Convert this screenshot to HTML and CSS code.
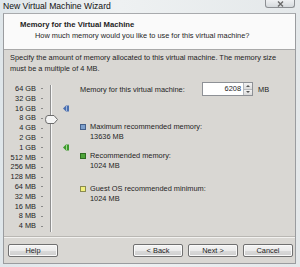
FILE: index.html
```html
<!DOCTYPE html>
<html>
<head>
<meta charset="utf-8">
<link rel="stylesheet" href="styles.css">
</head>
<body>
<div class="window">
  <div class="titlebar">
    <span class="title">New Virtual Machine Wizard</span>
    <span class="close"><svg width="9" height="6" viewBox="0 0 9 6"><path d="M2 0.5 L7 5.5 M7 0.5 L2 5.5" stroke="#6a6a6a" stroke-width="1.4" fill="none"/></svg></span>
  </div>
  <div class="client">
    <div class="header">
      <div class="h-title">Memory for the Virtual Machine</div>
      <div class="h-sub">How much memory would you like to use for this virtual machine?</div>
    </div>
    <div class="content">
      <div class="desc">Specify the amount of memory allocated to this virtual machine. The memory size must be a multiple of 4 MB.</div>
      <div class="main">
        <div class="scale">
          <div class="labels">
            <div class="row"><span>64 GB</span><i></i></div>
            <div class="row"><span>32 GB</span><i></i></div>
            <div class="row"><span>16 GB</span><i></i></div>
            <div class="row"><span>8 GB</span><i></i></div>
            <div class="row"><span>4 GB</span><i></i></div>
            <div class="row"><span>2 GB</span><i></i></div>
            <div class="row"><span>1 GB</span><i></i></div>
            <div class="row"><span>512 MB</span><i></i></div>
            <div class="row"><span>256 MB</span><i></i></div>
            <div class="row"><span>128 MB</span><i></i></div>
            <div class="row"><span>64 MB</span><i></i></div>
            <div class="row"><span>32 MB</span><i></i></div>
            <div class="row"><span>16 MB</span><i></i></div>
            <div class="row"><span>8 MB</span><i></i></div>
            <div class="row"><span>4 MB</span><i></i></div>
          </div>
          <div class="track"></div>
          <svg class="thumb" width="13" height="9" viewBox="0 0 13 9"><path d="M3 0.5 H9 L12.5 4.5 L9 8.5 H3 Q0.5 8.5 0.5 4.5 Q0.5 0.5 3 0.5 Z" fill="#f4f4f4" stroke="#6c6c6c" stroke-width="1"/></svg>
          <svg class="marker m-blue" width="6" height="7" viewBox="0 0 6 7"><path d="M0 3.5 L3 0.5 H6 V6.5 H3 Z" fill="#4a6fb0"/><path d="M3.5 1 V6" stroke="#9fb6dc" stroke-width="1"/></svg>
          <svg class="marker m-green" width="6" height="7" viewBox="0 0 6 7"><path d="M0 3.5 L3 0.5 H6 V6.5 H3 Z" fill="#3d9a2c"/><path d="M3.5 1 V6" stroke="#9fd88e" stroke-width="1"/></svg>
        </div>
        <div class="details">
          <div class="mem-row">
            <span class="mem-label">Memory for this virtual machine:</span>
            <span class="field">
              <span class="input">6208</span>
              <span class="spin"><span class="up"></span><span class="down"></span></span>
            </span>
            <span class="unit">MB</span>
          </div>
          <div class="legend l-max">
            <div class="leg-head"><span class="sq sq-blue"></span>Maximum recommended memory:</div>
            <div class="leg-val">13636 MB</div>
          </div>
          <div class="legend l-rec">
            <div class="leg-head"><span class="sq sq-green"></span>Recommended memory:</div>
            <div class="leg-val">1024 MB</div>
          </div>
          <div class="legend l-min">
            <div class="leg-head"><span class="sq sq-yellow"></span>Guest OS recommended minimum:</div>
            <div class="leg-val">1024 MB</div>
          </div>
        </div>
      </div>
    </div>
    <div class="footer">
      <button class="btn">Help</button>
      <div class="nav">
        <button class="btn">&lt; Back</button>
        <button class="btn">Next &gt;</button>
        <button class="btn">Cancel</button>
      </div>
    </div>
  </div>
</div>
</body>
</html>
```
FILE: styles.css
```css
* { box-sizing: border-box; }
html, body { margin: 0; padding: 0; }
body {
  width: 300px;
  height: 267px;
  overflow: hidden;
  font-family: "Liberation Sans", Arial, sans-serif;
  font-size: 7.4px;
  color: #1e1e1e;
  background: linear-gradient(90deg, #dfe6ea 0%, #eef1f2 40%, #e4e8ea 100%);
}
.window {
  width: 300px;
  height: 267px;
  display: flex;
  flex-direction: column;
}
.titlebar {
  height: 13px;
  display: flex;
  justify-content: space-between;
  align-items: flex-start;
  padding-left: 3px;
  padding-right: 5px;
}
.title {
  font-size: 8.6px;
  line-height: 13px;
  color: #111;
}
.close {
  width: 30px;
  height: 8px;
  border: 1px solid #8c8f93;
  border-top: none;
  border-radius: 0 0 3px 3px;
  background: linear-gradient(#eef0f2, #d6dadd);
  display: flex;
  align-items: center;
  justify-content: center;
}
.client {
  margin: 0 4px 3px 3px;
  flex: 1;
  background: #d9d7d3;
  border: 1px solid #9a9c9f;
  border-top-color: #a8aaad;
  display: flex;
  flex-direction: column;
}
.header {
  background: #fafafa;
  height: 36px;
  border-bottom: 1px solid #a9a9a9;
  padding: 5px 0 0 16px;
  line-height: 11px;
}
.h-title { font-weight: bold; font-size: 7.7px; }
.h-sub { padding-left: 15px; }
.content {
  padding: 2px 6px 0 6px;
  flex: 1;
}
.desc {
  line-height: 11px;
  width: 280px;
}
.main {
  margin-top: 10px;
  display: flex;
  margin-left: -6px;
}
.scale {
  position: relative;
  width: 75px;
  height: 147px;
}
.labels {
  display: flex;
  flex-direction: column;
}
.row {
  height: 9.8px;
  display: flex;
  align-items: center;
}
.row span {
  width: 32px;
  text-align: right;
  line-height: 9.8px;
  white-space: nowrap;
}
.row i {
  display: block;
  width: 2px;
  height: 1px;
  background: #8a8a8a;
  margin-left: 5px;
}
.track {
  position: absolute;
  left: 46px;
  top: 1px;
  width: 1px;
  height: 147px;
  background: #8f8f8f;
  box-shadow: 1px 0 0 #f6f6f6;
}
.thumb {
  position: absolute;
  left: 41px;
  top: 31px;
}
.marker { position: absolute; left: 59px; }
.m-blue { top: 21px; }
.m-green { top: 60px; }
.details {
  flex: 1;
  padding-left: 1px;
}
.mem-row {
  display: flex;
  align-items: center;
  height: 14px;
  margin-top: -2px;
}
.mem-label { width: 122px; white-space: nowrap; }
.field {
  display: flex;
  height: 14px;
  border: 1px solid #8e9196;
  background: #fff;
}
.input {
  width: 40px;
  text-align: right;
  padding-right: 2px;
  line-height: 12px;
}
.spin {
  width: 9px;
  display: flex;
  flex-direction: column;
  border-left: 1px solid #b5b8bc;
}
.spin span {
  flex: 1;
  background: linear-gradient(#f3f3f3, #dadada);
  position: relative;
}
.spin .up { border-bottom: 1px solid #b5b8bc; }
.spin .up::after, .spin .down::after {
  content: "";
  position: absolute;
  left: 2px;
  top: 2px;
  border-left: 2px solid transparent;
  border-right: 2px solid transparent;
}
.spin .up::after { border-bottom: 2px solid #555; }
.spin .down::after { border-top: 2px solid #555; top: 1px; }
.unit { margin-left: 5px; }
.legend { line-height: 10px; }
.l-max { margin-top: 26px; }
.l-rec { margin-top: 9px; }
.l-min { margin-top: 13px; }
.leg-head {
  display: flex;
  align-items: center;
}
.leg-val { padding-left: 10px; }
.sq {
  width: 6px;
  height: 6px;
  margin-right: 4px;
  border: 1px solid #555;
}
.sq-blue { background: #7d9fcc; border-color: #44608a; }
.sq-green { background: #4fa53a; border-color: #2f6d22; }
.sq-yellow { background: #f2f07c; border-color: #8a8a50; }
.footer {
  height: 27px;
  border-top: 1px solid #b9b7b3;
  box-shadow: inset 0 1px 0 #f2f1ef;
  display: flex;
  align-items: center;
  justify-content: space-between;
  padding: 0 2px 0 4px;
}
.nav { display: flex; gap: 5px; }
.btn {
  width: 50px;
  height: 13px;
  padding: 0;
  font-family: "Liberation Sans", Arial, sans-serif;
  font-size: 7.4px;
  color: #1e1e1e;
  border: 1px solid #707070;
  border-radius: 2px;
  background: linear-gradient(#f4f4f4 0%, #ebebeb 50%, #dadada 51%, #cfcfcf 100%);
  box-shadow: inset 0 0 0 1px #fafafa;
}
```
